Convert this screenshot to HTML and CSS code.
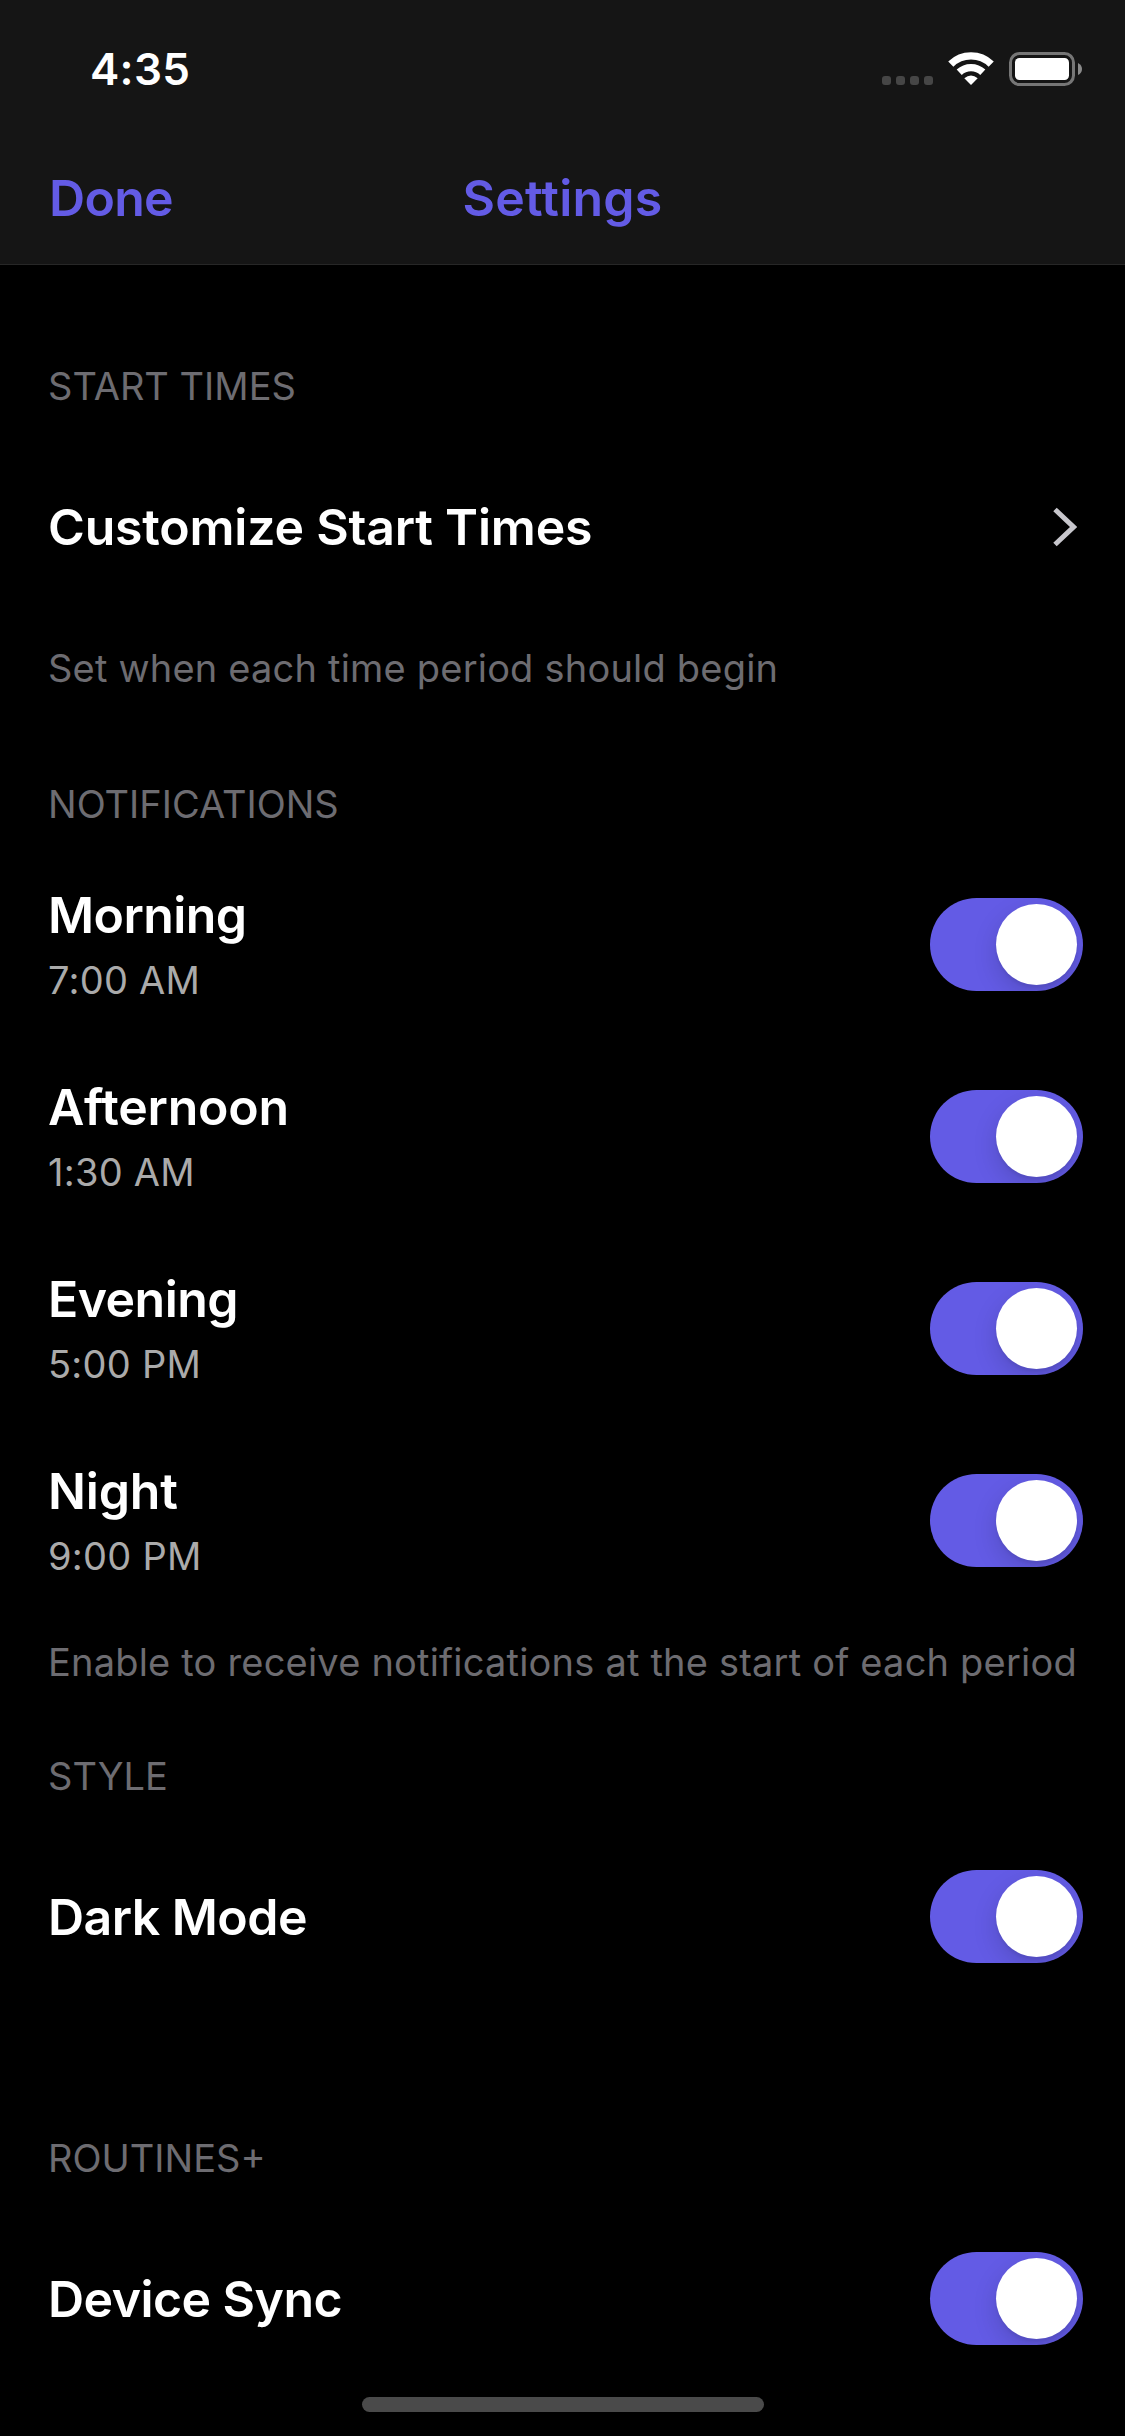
FILE: index.html
```html
<!DOCTYPE html>
<html lang="en">
<head>
<meta charset="utf-8">
<title>Settings</title>
<link rel="stylesheet" href="styles.css">
</head>
<body>
<div class="screen">
  <header class="header">
    <div class="status">
      <span class="clock">4:35</span>
      <div class="indicators">
        <div class="signal"><i></i><i></i><i></i><i></i></div>
        <svg class="wifi" width="46" height="34" viewBox="0 0 46 34">
          <g fill="none" stroke="#fff" stroke-width="7.4">
            <path d="M2.8 12.1A29 29 0 0 1 43.2 12.1"/>
            <path d="M11.2 20.3A17.2 17.2 0 0 1 34.8 20.3"/>
          </g>
          <path fill="#fff" d="M16.3 26.2Q23 20.6 29.7 26.2L23 33Z"/>
        </svg>
        <svg class="battery" width="74" height="34" viewBox="0 0 74 34">
          <rect x="1.5" y="1.5" width="63" height="31" rx="9" fill="none" stroke="#767676" stroke-width="3"/>
          <rect x="6" y="6" width="54" height="22" rx="4.5" fill="#fff"/>
          <path fill="#8a8a8a" d="M69 11Q73 13 73 17T69 23Z"/>
        </svg>
      </div>
    </div>
    <nav class="nav">
      <a class="done">Done</a>
      <h1 class="title">Settings</h1>
      <span></span>
    </nav>
  </header>

  <main class="content">
    <section class="section">
      <h2 class="heading">START TIMES</h2>
      <div class="row">
        <span class="label label-wide">Customize Start Times</span>
        <svg class="chevron" width="24" height="40" viewBox="0 0 24 40"><path d="M2 2.5 20.5 20 2 37.5" fill="none" stroke="#c7c6cc" stroke-width="5"/></svg>
      </div>
      <p class="note">Set when each time period should begin</p>
    </section>

    <section class="section notifications">
      <h2 class="heading">NOTIFICATIONS</h2>
      <div class="row">
        <div class="text"><span class="label">Morning</span><span class="time">7:00 AM</span></div>
        <div class="toggle"><div class="knob"></div></div>
      </div>
      <div class="row">
        <div class="text"><span class="label label-wide">Afternoon</span><span class="time">1:30 AM</span></div>
        <div class="toggle"><div class="knob"></div></div>
      </div>
      <div class="row">
        <div class="text"><span class="label">Evening</span><span class="time">5:00 PM</span></div>
        <div class="toggle"><div class="knob"></div></div>
      </div>
      <div class="row">
        <div class="text"><span class="label label-wide">Night</span><span class="time">9:00 PM</span></div>
        <div class="toggle"><div class="knob"></div></div>
      </div>
      <p class="note">Enable to receive notifications at the start of each period</p>
    </section>

    <section class="section style">
      <h2 class="heading">STYLE</h2>
      <div class="row">
        <span class="label">Dark Mode</span>
        <div class="toggle"><div class="knob"></div></div>
      </div>
    </section>

    <section class="section routines">
      <h2 class="heading">ROUTINES+</h2>
      <div class="row">
        <span class="label">Device Sync</span>
        <div class="toggle"><div class="knob"></div></div>
      </div>
    </section>
  </main>
  <div class="home-indicator"></div>
</div>
</body>
</html>
```
FILE: styles.css
```css
* { box-sizing: border-box; margin: 0; padding: 0; }

body {
  background: #000;
  font-family: Inter, "Liberation Sans", sans-serif;
  color: #fff;
}

.screen {
  position: relative;
  width: 1125px;
  height: 2436px;
  overflow: hidden;
  background: #000;
}

.header { height: 265px; background: #151515; border-bottom: 1px solid #272727; }

.status {
  height: 132px;
  padding: 0 43px 0 90px;
  display: flex;
  justify-content: space-between;
}
.clock { height: 138px; line-height: 138px; font-size: 44px; font-weight: 600; letter-spacing: 0.3px; }
.indicators { display: flex; align-items: flex-start; padding-top: 52px; }
.signal { display: flex; gap: 5px; margin: 24px 15px 0 0; }
.signal i { width: 9px; height: 9px; border-radius: 3px; background: #464646; }
.wifi { margin-right: 15px; }
.battery { margin-right: -1px; }

.nav {
  height: 132px;
  padding: 0 48px;
  display: grid;
  grid-template-columns: 1fr auto 1fr;
  align-items: center;
  color: #635be5;
}
.done, .title { font-size: 50px; font-weight: 600; }
.done { padding-left: 1px; letter-spacing: -0.7px; }
.title { letter-spacing: 0.2px; }

.content { padding-top: 76px; }
.section { padding: 0 42px 0 48px; }
.notifications { margin-top: 46px; }
.style { margin-top: 24px; }
.routines { margin-top: 100px; }

.heading, .note {
  height: 90px;
  line-height: 90px;
  font-size: 38px;
  font-weight: 400;
  color: #6d6c71;
  white-space: nowrap;
}
.note { letter-spacing: 0.2px; }

.row { height: 192px; display: flex; align-items: center; justify-content: space-between; }
.text { display: flex; flex-direction: column; gap: 3px; padding-top: 1px; }
.label {
  font-size: 50px;
  line-height: 66px;
  font-weight: 600;
  letter-spacing: -0.55px;
  white-space: nowrap;
}
.label-wide { letter-spacing: -0.2px; }
.time { font-size: 38px; line-height: 58px; letter-spacing: 0.25px; color: #aaa; }
.chevron { margin-right: 6px; }

.toggle {
  width: 153px;
  height: 93px;
  margin-bottom: 1px;
  padding: 6px;
  border-radius: 47px;
  background: #635be5;
  display: flex;
  justify-content: flex-end;
  overflow: hidden;
}
.knob {
  width: 81px;
  height: 81px;
  border-radius: 50%;
  background: #fff;
  box-shadow: 0 9px 24px rgba(0, 0, 0, 0.15), 0 3px 3px rgba(0, 0, 0, 0.06);
}

.home-indicator {
  position: absolute;
  left: 362px;
  top: 2397px;
  width: 402px;
  height: 15px;
  border-radius: 8px;
  background: #4a4a4a;
}
```
